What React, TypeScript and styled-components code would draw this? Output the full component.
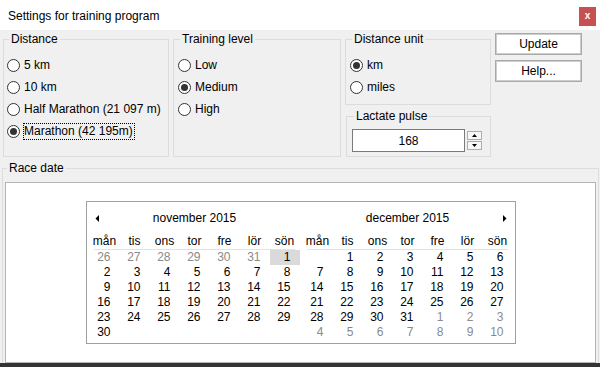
import React from 'react';
import styled, { createGlobalStyle } from 'styled-components';

const Global = createGlobalStyle`
  * { box-sizing: border-box; }
  html, body { margin: 0; padding: 0; }
  body {
    font-family: "Liberation Sans", Arial, sans-serif;
    font-size: 12px;
    color: #000;
    background: #f0f0f0;
  }
`;

const Window = styled.div`
  width: 600px;
  height: 367px;
  display: flex;
  flex-direction: column;
  background: #f0f0f0;
  overflow: hidden;
`;

const TitleBar = styled.div`
  height: 30px;
  flex: none;
  background: #fff;
  display: flex;
  align-items: center;
  justify-content: space-between;
  padding: 0 4px 0 8px;
`;

const Title = styled.span`
  font-size: 12px;
  line-height: 15px;
  padding-top: 2px;
`;

const CloseButton = styled.div`
  width: 17px;
  height: 19px;
  margin-top: 3px;
  background: #c75050;
  color: #fff;
  font-size: 10px;
  font-weight: bold;
  display: flex;
  align-items: center;
  justify-content: center;
  padding-bottom: 2px;
`;

const Body = styled.div`
  flex: 1;
  display: flex;
  flex-direction: column;
  padding: 2px 1px 0 2px;
  min-height: 0;
`;

const TopRow = styled.div`
  display: grid;
  grid-template-columns: 166px 168px 146px 87px;
  column-gap: 4px;
  height: 125px;
  margin-left: 1px;
`;

const Group = styled.fieldset<{ $pad: string; $h?: number; $ml?: number }>`
  margin: 0 0 0 ${p => p.$ml ?? 0}px;
  min-width: 0;
  border: 1px solid #dcdcdc;
  padding: ${p => p.$pad};
  ${p => (p.$h ? `height: ${p.$h}px;` : '')}
`;

const Caption = styled.legend`
  padding: 0 2px;
  margin-left: 2px;
  font-size: 12px;
  line-height: 15px;
`;

const Option = styled.div`
  display: flex;
  align-items: center;
  height: 22px;
  gap: 4px;
`;

const RadioDot = styled.span<{ $checked?: boolean }>`
  width: 13px;
  height: 13px;
  border-radius: 50%;
  border: 1px solid #333;
  background: #fff;
  flex: none;
  display: flex;
  align-items: center;
  justify-content: center;
  &::after {
    content: '';
    width: 7px;
    height: 7px;
    border-radius: 50%;
    background: ${p => (p.$checked ? '#333' : 'transparent')};
  }
`;

const OptionText = styled.span<{ $focused?: boolean }>`
  line-height: 15px;
  padding: 0 1px 0 0;
  border: 1px dotted ${p => (p.$focused ? '#000' : 'transparent')};
  margin-left: -1px;
`;

const Column = styled.div`
  display: flex;
  flex-direction: column;
  gap: 4px;
`;

const PulseRow = styled.div`
  display: flex;
  align-items: flex-start;
  gap: 2px;
`;

const PulseInput = styled.input`
  width: 113px;
  height: 23px;
  border: 1px solid #7a7a7a;
  background: #fff;
  font: inherit;
  font-size: 12px;
  text-align: center;
  padding: 0;
  outline: none;
  color: #000;
`;

const Spinner = styled.div`
  display: flex;
  flex-direction: column;
  gap: 1px;
  margin-top: 2px;
`;

const SpinButton = styled.div`
  width: 15px;
  height: 9px;
  border: 1px solid #adadad;
  background: #f7f7f7;
  display: flex;
  align-items: center;
  justify-content: center;
`;

const ButtonColumn = styled.div`
  display: flex;
  flex-direction: column;
  gap: 5px;
  padding-top: 1px;
`;

const PushButton = styled.div`
  height: 22px;
  border: 1px solid #a9a9a9;
  box-shadow: inset 0 0 0 1px #cdcdcd;
  background: #fff;
  display: flex;
  align-items: center;
  justify-content: center;
  font-size: 12px;
`;

const RaceGroup = styled.fieldset`
  margin: 4px 0 0 0;
  min-width: 0;
  flex: 1;
  min-height: 0;
  border: 1px solid #dcdcdc;
  border-bottom: none;
  padding: 6px 2px 0 2px;
  display: flex;
  flex-direction: column;
`;

const WhiteBox = styled.div`
  flex: 1;
  background: #fff;
  border: 1px solid #b4b4b4;
  display: flex;
  align-items: center;
  justify-content: center;
`;

const Calendar = styled.div`
  display: flex;
  gap: 3px;
  border: 1px solid #a0a0a0;
  background: #fff;
  padding: 0 2px 3px 3px;
`;

const Month = styled.div`
  width: 210px;
  display: flex;
  flex-direction: column;
`;

const MonthTitle = styled.div`
  height: 32px;
  display: grid;
  grid-template-columns: 20px 1fr 20px;
  align-items: center;
  text-align: center;
  font-size: 12px;
`;

const ArrowCell = styled.div<{ $side: 'left' | 'right' }>`
  display: flex;
  justify-content: ${p => (p.$side === 'left' ? 'flex-start' : 'flex-end')};
  padding: ${p => (p.$side === 'left' ? '0 0 0 5px' : '0 6px 0 0')};
  padding-top: 1px;
`;

const WeekHeader = styled.div`
  display: grid;
  grid-template-columns: repeat(7, 30px);
  height: 15px;
`;

const WeekDay = styled.div`
  text-align: center;
  line-height: 15px;
`;

const Separator = styled.div`
  height: 1px;
  background: #e3e3e3;
  margin: 0 5px 0 4px;
`;

const DayGrid = styled.div`
  display: grid;
  grid-template-columns: repeat(7, 30px);
  grid-auto-rows: 15px;
`;

const Day = styled.div<{ $muted?: boolean; $today?: boolean }>`
  text-align: right;
  padding-right: 9px;
  line-height: 15px;
  color: ${p => (p.$muted ? '#8a8a8a' : '#000')};
  background: ${p => (p.$today ? '#dadada' : 'transparent')};
`;

const BottomStrip = styled.div`
  height: 4px;
  flex: none;
  background: #333;
`;

type Cell = { d: number | null; muted?: boolean; today?: boolean };

const weekDays = ['mån', 'tis', 'ons', 'tor', 'fre', 'lör', 'sön'];

const range = (a: number, b: number, muted = false): Cell[] => {
  const out: Cell[] = [];
  for (let i = a; i <= b; i++) out.push({ d: i, muted });
  return out;
};

const novDays: Cell[] = [
  ...range(26, 31, true),
  { d: 1, today: true },
  ...range(2, 30),
];

const decDays: Cell[] = [
  { d: null },
  ...range(1, 31),
  ...range(1, 10, true),
];

const TriLeft = () => (
  <svg width="4" height="7" viewBox="0 0 4 7">
    <polygon points="4,0 4,7 0.5,3.5" fill="#000" />
  </svg>
);

const TriRight = () => (
  <svg width="4" height="7" viewBox="0 0 4 7">
    <polygon points="0,0 0,7 3.5,3.5" fill="#000" />
  </svg>
);

const TriUp = () => (
  <svg width="5" height="3" viewBox="0 0 5 3">
    <polygon points="0,3 5,3 2.5,0" fill="#000" />
  </svg>
);

const TriDown = () => (
  <svg width="5" height="3" viewBox="0 0 5 3">
    <polygon points="0,0 5,0 2.5,3" fill="#000" />
  </svg>
);

const Radio: React.FC<{ label: string; checked?: boolean; focused?: boolean }> = ({
  label,
  checked,
  focused,
}) => (
  <Option>
    <RadioDot $checked={checked} />
    <OptionText $focused={focused}>{label}</OptionText>
  </Option>
);

const MonthView: React.FC<{ title: string; days: Cell[]; arrow: 'left' | 'right' }> = ({
  title,
  days,
  arrow,
}) => (
  <Month>
    <MonthTitle>
      <ArrowCell $side="left">{arrow === 'left' && <TriLeft />}</ArrowCell>
      <span>{title}</span>
      <ArrowCell $side="right">{arrow === 'right' && <TriRight />}</ArrowCell>
    </MonthTitle>
    <WeekHeader>
      {weekDays.map(w => (
        <WeekDay key={w}>{w}</WeekDay>
      ))}
    </WeekHeader>
    <Separator />
    <DayGrid>
      {days.map((c, i) => (
        <Day key={i} $muted={c.muted} $today={c.today}>
          {c.d ?? ''}
        </Day>
      ))}
    </DayGrid>
  </Month>
);

export default function App() {
  return (
    <>
      <Global />
      <Window>
        <TitleBar>
          <Title>Settings for training program</Title>
          <CloseButton>x</CloseButton>
        </TitleBar>
        <Body>
          <TopRow>
            <Group $pad="7px 3px 0 3px">
              <Caption>Distance</Caption>
              <Radio label="5 km" />
              <Radio label="10 km" />
              <Radio label="Half Marathon (21 097 m)" />
              <Radio label="Marathon (42 195m)" checked focused />
            </Group>
            <Group $pad="7px 4px 0 4px">
              <Caption>Training level</Caption>
              <Radio label="Low" />
              <Radio label="Medium" checked />
              <Radio label="High" />
            </Group>
            <Column>
              <Group $pad="7px 4px 0 4px" $h={73}>
                <Caption>Distance unit</Caption>
                <Radio label="km" checked />
                <Radio label="miles" />
              </Group>
              <Group $pad="5px 4px 0 5px" $h={48} $ml={1}>
                <Caption>Lactate pulse</Caption>
                <PulseRow>
                  <PulseInput readOnly value="168" />
                  <Spinner>
                    <SpinButton>
                      <TriUp />
                    </SpinButton>
                    <SpinButton>
                      <TriDown />
                    </SpinButton>
                  </Spinner>
                </PulseRow>
              </Group>
            </Column>
            <ButtonColumn>
              <PushButton>Update</PushButton>
              <PushButton>Help...</PushButton>
            </ButtonColumn>
          </TopRow>
          <RaceGroup>
            <Caption>Race date</Caption>
            <WhiteBox>
              <Calendar>
                <MonthView title="november 2015" days={novDays} arrow="left" />
                <MonthView title="december 2015" days={decDays} arrow="right" />
              </Calendar>
            </WhiteBox>
          </RaceGroup>
        </Body>
        <BottomStrip />
      </Window>
    </>
  );
}
